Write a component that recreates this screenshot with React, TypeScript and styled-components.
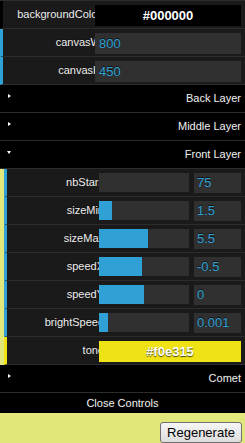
import { useState } from 'react';
import styled, { createGlobalStyle } from 'styled-components';

const PAGE_BG = '#e1e77b';
const ACCENT = '#2fa1d6';

const GlobalStyle = createGlobalStyle`
  body {
    margin: 0;
    background: ${PAGE_BG};
    font-family: "Liberation Sans", Arial, sans-serif;
  }
`;

const Panel = styled.div`
  width: 245px;
  border-top: 1px solid #2c2c2c;
  font-size: 11px;
  color: #eee;
  text-shadow: 0 -1px 0 #111;
`;

const Row = styled.div<{ $accent: string }>`
  display: flex;
  align-items: flex-start;
  height: 27px;
  line-height: 27px;
  padding: 0 4px 0 5px;
  background: #1a1a1a;
  border-left: 3px solid ${(p) => p.$accent};
  border-bottom: 1px solid #2c2c2c;
`;

const Label = styled.div`
  flex: none;
  width: 87px;
  overflow: hidden;
  white-space: nowrap;
`;

const LabelText = styled.span<{ $nested?: boolean }>`
  display: block;
  width: ${(p) => (p.$nested ? 92 : 93)}px;
  text-align: right;
`;

const ColorField = styled.div<{ $bg: string }>`
  flex: 1;
  height: 21px;
  margin-top: 4px;
  background: ${(p) => p.$bg};
  color: #fff;
  font-size: 13px;
  font-weight: bold;
  line-height: 21px;
  text-align: center;
  text-shadow: rgba(0, 0, 0, 0.7) 0 1px 1px;
`;

const NumberField = styled.div<{ $wide?: boolean }>`
  flex: ${(p) => (p.$wide ? '1' : 'none')};
  width: ${(p) => (p.$wide ? 'auto' : '47px')};
  height: ${(p) => (p.$wide ? 21 : 20)}px;
  margin-top: 4px;
  padding: 0 ${(p) => (p.$wide ? 4 : 3)}px;
  box-sizing: border-box;
  background: #303030;
  color: ${ACCENT};
  font-size: 13px;
  line-height: ${(p) => (p.$wide ? 21 : 20)}px;
`;

const Slider = styled.div`
  flex: none;
  width: 90px;
  height: 19px;
  margin: 4px 5px 0 0;
  background: #303030;
`;

const SliderFill = styled.div`
  height: 100%;
  background: ${ACCENT};
`;

const Title = styled.div<{ $open: boolean }>`
  display: flex;
  align-items: flex-start;
  justify-content: space-between;
  height: 27px;
  line-height: 27px;
  padding: 0 4px 0 ${(p) => (p.$open ? 7 : 8)}px;
  background: #000;
  border-bottom: 1px solid #2c2c2c;
  cursor: pointer;
`;

const Arrow = styled.span<{ $open: boolean }>`
  width: 0;
  height: 0;
  margin-top: ${(p) => (p.$open ? 10 : 9)}px;
  ${(p) =>
    p.$open
      ? `border-top: 3px solid #fff;
         border-left: 2.5px solid transparent;
         border-right: 2.5px solid transparent;`
      : `border-left: 3px solid #fff;
         border-top: 2.5px solid transparent;
         border-bottom: 2.5px solid transparent;`}
`;

const FolderBody = styled.div`
  margin-left: 4px;
`;

const CloseBar = styled.div`
  height: 20px;
  line-height: 20px;
  background: #000;
  text-align: center;
  cursor: pointer;
`;

const Footer = styled.div`
  display: flex;
  justify-content: flex-end;
  padding: 9px 3px 0 0;
`;

const Button = styled.button`
  height: 21px;
  padding: 0 6px;
  border: 1px solid #707070;
  border-radius: 3px;
  background: linear-gradient(#f6f6f6, #dddddd);
  color: #000;
  font-family: "Liberation Sans", Arial, sans-serif;
  font-size: 13px;
  line-height: 19px;
`;

type Slide = { name: string; value: string; fill: number };

const frontSliders: Slide[] = [
  { name: 'nbStars', value: '75', fill: 0 },
  { name: 'sizeMin', value: '1.5', fill: 13 },
  { name: 'sizeMax', value: '5.5', fill: 49 },
  { name: 'speedX', value: '-0.5', fill: 43 },
  { name: 'speedY', value: '0', fill: 45 },
  { name: 'brightSpeed', value: '0.001', fill: 9 },
];

function Folder({ name, open, onToggle }: { name: string; open: boolean; onToggle: () => void }) {
  return (
    <Title $open={open} onClick={onToggle}>
      <Arrow $open={open} />
      <span>{name}</span>
    </Title>
  );
}

export default function App() {
  const [front, setFront] = useState(true);

  return (
    <>
      <GlobalStyle />
      <Panel>
        <Row $accent="#000000">
          <Label><LabelText>backgroundColor</LabelText></Label>
          <ColorField $bg="#000000">#000000</ColorField>
        </Row>
        <Row $accent={ACCENT}>
          <Label><LabelText>canvasW</LabelText></Label>
          <NumberField $wide>800</NumberField>
        </Row>
        <Row $accent={ACCENT}>
          <Label><LabelText>canvasH</LabelText></Label>
          <NumberField $wide>450</NumberField>
        </Row>

        <Folder name="Back Layer" open={false} onToggle={() => {}} />
        <Folder name="Middle Layer" open={false} onToggle={() => {}} />
        <Folder name="Front Layer" open={front} onToggle={() => setFront(!front)} />

        {front && (
          <FolderBody>
            {frontSliders.map((s) => (
              <Row key={s.name} $accent={ACCENT}>
                <Label><LabelText $nested>{s.name}</LabelText></Label>
                <Slider>
                  <SliderFill style={{ width: s.fill }} />
                </Slider>
                <NumberField>{s.value}</NumberField>
              </Row>
            ))}
            <Row $accent="#f0e315">
              <Label><LabelText $nested>tone</LabelText></Label>
              <ColorField $bg="#f0e315">#f0e315</ColorField>
            </Row>
          </FolderBody>
        )}

        <Folder name="Comet" open={false} onToggle={() => {}} />
        <CloseBar>Close Controls</CloseBar>
      </Panel>
      <Footer>
        <Button>Regenerate</Button>
      </Footer>
    </>
  );
}
